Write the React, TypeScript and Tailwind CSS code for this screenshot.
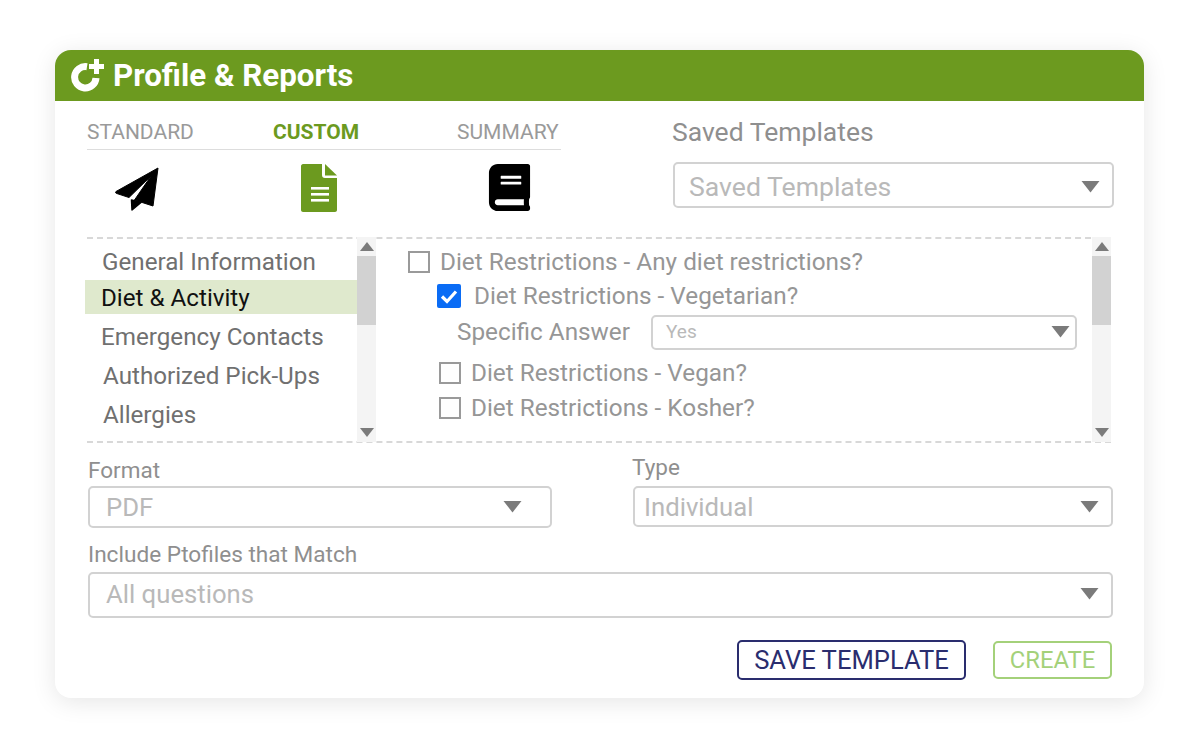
import React from "react";
import { FaBook } from "react-icons/fa";

const Caret = ({ className = "" }: { className?: string }) => (
  <svg width="19" height="12" viewBox="0 0 18 12" className={`shrink-0 ${className}`}>
    <path d="M0 0H18L9 11.5Z" fill="#7b7b7b" />
  </svg>
);

const Select = ({ text, className = "", textClass = "" }: { text: string; className?: string; textClass?: string }) => (
  <div className={`flex items-center justify-between rounded-[5px] border-2 border-[#d2d2d2] bg-white ${className}`}>
    <span className={`text-[#b9b9b9] ${textClass}`}>{text}</span>
    <Caret />
  </div>
);

const Box = ({ className = "" }: { className?: string }) => (
  <span className={`block h-[22px] w-[22px] shrink-0 border-2 border-[#9a9a9a] bg-white ${className}`} />
);

const Scroll = ({ className = "" }: { className?: string }) => (
  <div className={`mt-[-2px] flex h-[205px] w-[19px] shrink-0 flex-col bg-[#f4f4f4] ${className}`}>
    <div className="flex h-[19px] items-center justify-center">
      <svg width="14" height="9" viewBox="0 0 14 9"><path d="M7 0L14 9H0Z" fill="#7b7b7b" /></svg>
    </div>
    <div className="h-[69px] bg-[#d2d2d2]" />
    <div className="flex-1" />
    <div className="flex h-[19px] items-center justify-center">
      <svg width="14" height="9" viewBox="0 0 14 9"><path d="M0 0H14L7 9Z" fill="#7b7b7b" /></svg>
    </div>
  </div>
);

export default function App() {
  return (
    <div
      className="h-[750px] w-[1200px] overflow-hidden bg-white pl-[55px] pt-[50px]"
      style={{ fontFamily: "Roboto, sans-serif" }}
    >
      <div className="h-[648px] w-[1089px] overflow-hidden rounded-[16px] bg-white shadow-[0_4px_24px_rgba(0,0,0,0.10)]">
        {/* header */}
        <div className="flex h-[51px] items-center gap-[8px] bg-[#6c9a1f] pl-[16px]">
          <svg width="34" height="34" viewBox="0 0 34 34" className="mt-[-1px]">
            <path d="M16 8.7A10.7 10.7 0 1 0 25 20" fill="none" stroke="#fff" strokeWidth="7" />
            <path d="M23 1H28V6H33V11H28V16H23V11H18V6H23Z" fill="#fff" />
          </svg>
          <h1 className="text-[31.3px] font-bold leading-none text-white">Profile &amp; Reports</h1>
        </div>

        {/* top row */}
        <div className="flex h-[136px] pl-[32px] pt-[20px]">
          <div className="w-[474px]">
            <div className="flex h-[29px] border-b border-[#dddddd] text-[21px] leading-[22px]">
              <span className="w-[186px] text-[#9a9a9a]">STANDARD</span>
              <span className="w-[184px] font-bold text-[#6c9a1f]">CUSTOM</span>
              <span className="text-[#9a9a9a]">SUMMARY</span>
            </div>
            <div className="flex items-start pt-[14px]">
              <div className="mt-[3px] flex w-[100px] justify-center">
                <svg width="44" height="44" viewBox="0 0 44 44">
                  <path d="M43 1L1 24.5C.3 25 .4 26 1.2 26.3L14 30.5L36 9L19.5 33L38 39Z" fill="#000" stroke="#000" strokeWidth="1" strokeLinejoin="round" />
                  <path d="M16.5 33L17 43L26 35.5Z" fill="#000" stroke="#000" strokeWidth="1.5" strokeLinejoin="round" />
                </svg>
              </div>
              <div className="ml-[114px] flex w-[36px] justify-center">
                <svg width="36" height="48" viewBox="0 0 36 48">
                  <path d="M2 0H21V11C21 13 22 14 24 14H36V46C36 47 35 48 34 48H2C1 48 0 47 0 46V2C0 1 1 0 2 0Z" fill="#6c9a1f" />
                  <path d="M24 0L36 11.5H24Z" fill="#6c9a1f" />
                  <rect x="10" y="23" width="18" height="2.6" fill="#fff" />
                  <rect x="10" y="29" width="18" height="2.6" fill="#fff" />
                  <rect x="10" y="35" width="18" height="2.6" fill="#fff" />
                </svg>
              </div>
              <div className="ml-[149px]">
                <FaBook size={47} color="#000" />
              </div>
            </div>
          </div>
          <div className="ml-[112px] w-[441px]">
            <div className="ml-[-1px] mt-[-4px] text-[26.5px] leading-[30px] text-[#8f8f8f]">Saved Templates</div>
            <Select text="Saved Templates" className="mt-[15px] h-[46px] pl-[14px] pr-[12px] pt-[3px]" textClass="text-[26.6px]" />
          </div>
        </div>

        {/* dashed area */}
        <div className="ml-[32px] mr-[33px] flex h-[206px] border-y-2 border-dashed border-[#d8d8d8]">
          <div className="ml-[-2px] flex w-[291px] shrink-0">
            <div className="flex-1 pt-[8px] text-[24.2px] leading-[30px] text-[#707070]">
              <div className="pl-[17px]">General Information</div>
              <div className="mt-[3px] h-[34px] bg-[#dfe9cd] pl-[16px] leading-[36px] text-[#111111]">Diet &amp; Activity</div>
              <div className="mt-[8px] pl-[16px]">Emergency Contacts</div>
              <div className="mt-[9px] pl-[18px]">Authorized Pick-Ups</div>
              <div className="mt-[9px] pl-[18px]">Allergies</div>
            </div>
            <Scroll />
          </div>
          <div className="flex-1 pl-[32px] pt-[11px] text-[24.3px] leading-[28px] text-[#969696]">
            <div className="flex h-[24px] items-center gap-[10px]">
              <Box />
              <span>Diet Restrictions - Any diet restrictions?</span>
            </div>
            <div className="ml-[29px] mt-[10px] flex h-[24px] items-center gap-[13px]">
              <span className="flex h-[24px] w-[24px] shrink-0 items-center justify-center rounded-[2px] bg-[#0a6cf5]">
                <svg width="18" height="15" viewBox="0 0 18 15">
                  <path d="M2 7.5L7 12.5L16 2.5" fill="none" stroke="#fff" strokeWidth="3.2" />
                </svg>
              </span>
              <span>Diet Restrictions - Vegetarian?</span>
            </div>
            <div className="ml-[49px] mt-[6px] flex h-[36px] items-center">
              <span className="w-[194px] shrink-0">Specific Answer</span>
              <Select text="Yes" className="h-[35px] w-[426px] pl-[13px] pr-[5px]" textClass="text-[19px]" />
            </div>
            <div className="ml-[31px] mt-[11px] flex h-[24px] items-center gap-[10px]">
              <Box />
              <span>Diet Restrictions - Vegan?</span>
            </div>
            <div className="ml-[31px] mt-[11px] flex h-[24px] items-center gap-[10px]">
              <Box />
              <span>Diet Restrictions - Kosher?</span>
            </div>
          </div>
          <Scroll />
        </div>

        {/* format + type */}
        <div className="ml-[33px] mr-[31px] mt-[15px] flex">
          <div className="w-[464px]">
            <div className="text-[22.5px] leading-[24px] text-[#8f8f8f]">Format</div>
            <Select text="PDF" className="mt-[4px] h-[42px] pl-[16px] pr-[28px]" textClass="text-[25.7px]" />
          </div>
          <div className="ml-[80px] flex-1">
            <div className="mt-[-3px] text-[22.5px] leading-[24px] text-[#8f8f8f]">Type</div>
            <Select text="Individual" className="ml-[1px] mt-[7px] h-[41px] pl-[9px] pr-[12px]" textClass="mt-[1px] text-[25.7px]" />
          </div>
        </div>

        {/* include */}
        <div className="ml-[33px] mr-[31px] mt-[15px]">
          <div className="text-[22.6px] leading-[24px] text-[#8f8f8f]">Include Ptofiles that Match</div>
          <Select text="All questions" className="mt-[5px] h-[46px] pb-[2px] pl-[16px] pr-[12px]" textClass="text-[25.7px]" />
        </div>

        {/* buttons */}
        <div className="mr-[32px] mt-[22px] flex items-center justify-end gap-[27px]">
          <button className="h-[40px] w-[229px] rounded-[5px] border-2 border-[#2a2d6e] pt-[2px] text-[25.6px] leading-none text-[#2a2d6e]">
            SAVE TEMPLATE
          </button>
          <button className="h-[38px] w-[119px] rounded-[5px] border-2 border-[#a4d17a] pt-[2px] text-[23.8px] leading-none text-[#a4d17a]">
            CREATE
          </button>
        </div>
      </div>
    </div>
  );
}
